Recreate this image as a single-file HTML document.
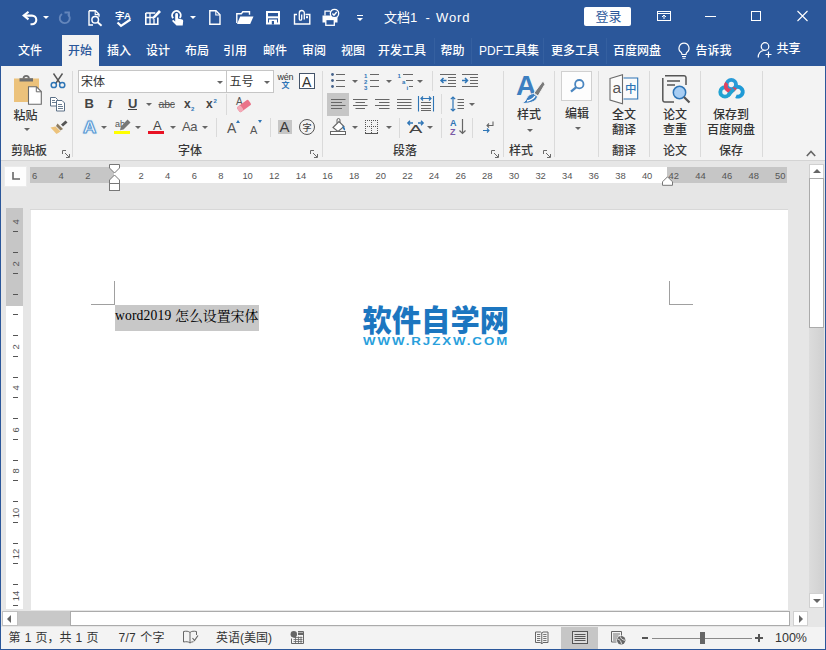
<!DOCTYPE html>
<html lang="zh-CN">
<head>
<meta charset="utf-8">
<title>文档1 - Word</title>
<style>
*{box-sizing:border-box;margin:0;padding:0}
html,body{width:826px;height:650px;overflow:hidden;background:#e6e6e6}
body{position:relative;font-family:"Liberation Sans","Noto Sans CJK SC",sans-serif;font-size:12px;color:#333;line-height:1}
.abs{position:absolute}
.t{position:absolute;white-space:nowrap;line-height:16px;height:16px;font-weight:500;margin-top:0.5px}
#doclat,#doccjk,#wm1,#wm2{margin-top:0;font-weight:400}
svg{position:absolute;overflow:visible}
/* title + tabs */
#title{left:0;top:0;width:826px;height:66.500px;background:#2b579a}
#title .t{color:#fff}
.tab{font-size:12px;top:42px;font-weight:500}
.tsep{position:absolute;top:38px;width:1px;height:26px;background:#3560a0}
#tab-home{left:62px;top:35px;width:37px;height:32px;background:#f3f3f3}
/* ribbon */
#ribbon{left:1px;top:66px;width:824px;height:95px;background:#f3f3f3;border-bottom:1px solid #d4d4d4}
.vsep{position:absolute;width:1px;background:#dadada}
.lbl{color:#333;top:142px}
.btxt{color:#404040}
.dd{position:absolute;width:0;height:0;border-left:3px solid transparent;border-right:3px solid transparent;border-top:3px solid #666}
/* status */
#status{left:1px;top:627px;width:824px;height:22px;background:#f3f3f3}
#status .t{top:630px;color:#383838}
</style>
</head>
<body>
<!-- TITLE BAR -->
<div id="title" class="abs"></div>
<div id="tab-home" class="abs"></div>
<svg style="left:22px;top:10px" width="17" height="16" viewBox="0 0 17 16"><path d="M6.500 1.800L1.700 5.600l4.800 3.800" fill="none" stroke="#fff" stroke-width="2.100"/><path d="M2.500 5.600H10a4.300 4.300 0 0 1 0 8.600H8.500" fill="none" stroke="#fff" stroke-width="2.100"/></svg>
<div class="dd" style="left:43px;top:16px;border-top-color:#fff"></div>
<svg style="left:58px;top:10px" width="14" height="15" viewBox="0 0 14 15"><path d="M9.800 4.200A5 5 0 1 1 4 4" fill="none" stroke="#6486bb" stroke-width="1.900"/><path d="M6.500 2.500h4.500v4.200" fill="none" stroke="#6486bb" stroke-width="1.800"/></svg>
<svg style="left:88px;top:10px" width="15" height="16" viewBox="0 0 15 16"><path d="M1 .8h6.500l3.500 3.500v2.500M1 .8V15h4" fill="none" stroke="#fff" stroke-width="1.400"/><path d="M7.200 1v3.600h3.600" fill="none" stroke="#fff" stroke-width="1.100"/><circle cx="7.200" cy="9.800" r="3.300" fill="none" stroke="#fff" stroke-width="1.500"/><path d="M9.600 12.200l4 3.500" stroke="#fff" stroke-width="1.900"/></svg>
<div class="t" style="left:115px;top:7.500px;font-size:9.500px;font-weight:bold;color:#fff;letter-spacing:-0.5px">字A</div>
<svg style="left:116px;top:17.500px" width="16" height="10" viewBox="0 0 16 10"><path d="M1.500 4.500l3.500 3.300L14.500 1.500" fill="none" stroke="#fff" stroke-width="2.200"/></svg>
<svg style="left:145px;top:9px" width="16" height="16" viewBox="0 0 16 16"><path d="M.8 4h9.500M.8 4v11.200h12V8.500" fill="none" stroke="#fff" stroke-width="1.600"/><path d="M.8 8.500h7.500M5 4v11M9 10v5" stroke="#fff" stroke-width="1.300" fill="none"/><path d="M7.500 10.500l.8-3.300L14 1l2 2-6 6z" fill="#fff"/></svg>
<svg style="left:170px;top:9px" width="14" height="17" viewBox="0 0 14 17"><path d="M3.200 9.200A4.300 4.300 0 1 1 9.800 9" fill="none" stroke="#fff" stroke-width="1.900"/><path d="M5.200 5.500a1.400 1.400 0 0 1 2.800 0V9.500l4.200 1c.6.200 1 .7 1 1.400l-.5 4.600H6.500L2.500 12.500c-.7-.8.300-2 1.300-1.200l1.400 1.200z" fill="#fff"/></svg>
<div class="dd" style="left:190px;top:16px;border-top-color:#fff"></div>
<svg style="left:209px;top:10px" width="12" height="15" viewBox="0 0 12 15"><path d="M.8 .8h6.200l4 4V14.200H.8z" fill="none" stroke="#fff" stroke-width="1.400"/><path d="M6.800 1v4h4" fill="none" stroke="#fff" stroke-width="1.100"/></svg>
<svg style="left:236px;top:11px" width="18" height="14" viewBox="0 0 18 14"><path d="M.8 12V2.800h4.500l1.500-2h6.700v3" fill="none" stroke="#fff" stroke-width="1.400"/><path d="M1 13l3.200-7.500H17.500L14.200 13z" fill="#fff"/></svg>
<svg style="left:266px;top:11px" width="14" height="14" viewBox="0 0 14 14"><path d="M1 1h12v11.500H1z" fill="none" stroke="#fff" stroke-width="2"/><path d="M1 6.300h12" stroke="#fff" stroke-width="2"/><rect x="3" y="8.500" width="8" height="4.500" fill="#fff"/><rect x="5.800" y="10" width="2.200" height="3.500" fill="#2b579a"/></svg>
<svg style="left:293px;top:9px" width="18" height="16" viewBox="0 0 18 16"><path d="M4 5.500H1.500V15H16.800V5.500H12.500" fill="none" stroke="#fff" stroke-width="1.400"/><path d="M8.700 5.500v4.500a1.200 1.200 0 0 1-2.400 0V4a2.500 2.500 0 0 1 5 0V10.500" fill="none" stroke="#fff" stroke-width="1.300"/><rect x="13" y="7.200" width="2" height="2" fill="#fff"/></svg>
<svg style="left:322px;top:9px" width="18" height="17" viewBox="0 0 18 17"><path d="M3 6.500V2.200h5" fill="none" stroke="#fff" stroke-width="1.300"/><path d="M.5 6.500h15v7H.5z" fill="#fff"/><rect x="3.800" y="10.500" width="8.500" height="5.800" fill="#2b579a" stroke="#fff" stroke-width="1.300"/><circle cx="12.500" cy="4.500" r="4.200" fill="#2b579a" stroke="#fff" stroke-width="1.300"/><path d="M10.400 4.500l1.600 1.700 2.700-3.200" fill="none" stroke="#fff" stroke-width="1.400"/></svg>
<div class="abs" style="left:357px;top:14.500px;width:6px;height:1.200px;background:#fff"></div>
<div class="dd" style="left:357px;top:17.500px;border-top-color:#fff"></div>
<div class="t" style="left:384px;top:9px;font-size:13px;color:#fff;font-weight:400">文档1</div>
<div class="t" style="left:425.500px;top:9px;font-size:13px;color:#fff">-</div>
<div class="t" style="left:436px;top:9px;font-size:13px;color:#fff;letter-spacing:0.9px">Word</div>
<div class="abs" style="left:584px;top:7px;width:47px;height:19px;background:#fff;border-radius:2px"></div>
<div class="t" style="left:595.500px;top:8.500px;font-size:13px;color:#2b579a;font-weight:400">登录</div>
<svg style="left:657px;top:11px" width="14" height="10" viewBox="0 0 14 10"><rect x=".5" y=".5" width="13" height="9" fill="none" stroke="#fff"/><path d="M.5 2.500h13" stroke="#fff"/><path d="M7 8V4.200M5 6l2-2 2 2" stroke="#fff" fill="none"/></svg>
<div class="abs" style="left:705px;top:16px;width:11px;height:1px;background:#fff"></div>
<div class="abs" style="left:751px;top:11px;width:10px;height:10px;border:1px solid #fff"></div>
<svg style="left:797px;top:11px" width="11" height="10" viewBox="0 0 11 10"><path d="M.5 0l10 10M10.500 0L.5 10" stroke="#fff" stroke-width="1.100"/></svg>
<div class="t tab" style="left:18px;color:#fff;">文件</div>
<div class="t tab" style="left:68px;color:#2b579a;">开始</div>
<div class="t tab" style="left:107px;color:#fff;">插入</div>
<div class="t tab" style="left:146px;color:#fff;">设计</div>
<div class="t tab" style="left:185px;color:#fff;">布局</div>
<div class="t tab" style="left:223px;color:#fff;">引用</div>
<div class="t tab" style="left:263px;color:#fff;">邮件</div>
<div class="t tab" style="left:302px;color:#fff;">审阅</div>
<div class="t tab" style="left:341px;color:#fff;">视图</div>
<div class="t tab" style="left:378px;color:#fff;">开发工具</div>
<div class="t tab" style="left:440.5px;color:#fff;">帮助</div>
<div class="t tab" style="left:479px;color:#fff;">PDF工具集</div>
<div class="t tab" style="left:551px;color:#fff;">更多工具</div>
<div class="t tab" style="left:613px;color:#fff;">百度网盘</div>
<div class="t tab" style="left:695.5px;color:#fff;">告诉我</div>
<div class="t tab" style="left:776.5px;top:40px;color:#fff">共享</div>
<div class="tsep" style="left:434px"></div>
<div class="tsep" style="left:471px"></div>
<div class="tsep" style="left:543px"></div>
<div class="tsep" style="left:606px"></div>
<svg style="left:677px;top:42px" width="14" height="18" viewBox="0 0 14 18"><path d="M7 1.2a5 5 0 0 0-3 9c.7.6 1 1.3 1 2.3h4c0-1 .3-1.700 1-2.300a5 5 0 0 0-3-9z" fill="none" stroke="#fff" stroke-width="1.200"/><path d="M5 14.500h4M5.500 16.300h3" stroke="#fff" stroke-width="1.100" fill="none"/></svg>
<svg style="left:757px;top:41px" width="16" height="18" viewBox="0 0 16 18"><circle cx="8" cy="5.500" r="3.800" fill="none" stroke="#fff" stroke-width="1.200"/><path d="M1.200 16.500c0-4 2.500-6.500 5.500-7" fill="none" stroke="#fff" stroke-width="1.200"/><path d="M11.500 10.500v6M8.500 13.500h6" stroke="#fff" stroke-width="1.200" fill="none"/></svg>
<!-- RIBBON -->
<div id="ribbon" class="abs"></div>
<div class="vsep" style="left:72px;top:71px;height:86px;background:#dadada"></div>
<div class="vsep" style="left:322px;top:71px;height:86px;background:#dadada"></div>
<div class="vsep" style="left:503px;top:71px;height:86px;background:#dadada"></div>
<div class="vsep" style="left:554px;top:71px;height:86px;background:#dadada"></div>
<div class="vsep" style="left:598px;top:71px;height:86px;background:#dadada"></div>
<div class="vsep" style="left:649px;top:71px;height:86px;background:#dadada"></div>
<div class="vsep" style="left:700px;top:71px;height:86px;background:#dadada"></div>
<div class="vsep" style="left:762px;top:71px;height:86px;background:#dadada"></div>
<div class="t" style="left:11px;top:142.5px;color:#383838">剪贴板</div>
<svg style="left:62px;top:150px" width="8" height="8" viewBox="0 0 8 8"><path d="M.5 4V.5H4" fill="none" stroke="#6a6a6a"/><path d="M3 3l4 4M7.500 4v3.500H4" fill="none" stroke="#6a6a6a"/></svg>
<div class="t" style="left:178px;top:142.5px;color:#383838">字体</div>
<svg style="left:310px;top:150px" width="8" height="8" viewBox="0 0 8 8"><path d="M.5 4V.5H4" fill="none" stroke="#6a6a6a"/><path d="M3 3l4 4M7.500 4v3.500H4" fill="none" stroke="#6a6a6a"/></svg>
<div class="t" style="left:393px;top:142.5px;color:#383838">段落</div>
<svg style="left:491px;top:150px" width="8" height="8" viewBox="0 0 8 8"><path d="M.5 4V.5H4" fill="none" stroke="#6a6a6a"/><path d="M3 3l4 4M7.500 4v3.500H4" fill="none" stroke="#6a6a6a"/></svg>
<div class="t" style="left:509px;top:142.5px;color:#383838">样式</div>
<svg style="left:543px;top:150px" width="8" height="8" viewBox="0 0 8 8"><path d="M.5 4V.5H4" fill="none" stroke="#6a6a6a"/><path d="M3 3l4 4M7.500 4v3.500H4" fill="none" stroke="#6a6a6a"/></svg>
<div class="t" style="left:612px;top:142.5px;color:#383838">翻译</div>
<div class="t" style="left:663px;top:142.5px;color:#383838">论文</div>
<div class="t" style="left:719px;top:142.5px;color:#383838">保存</div>
<svg style="left:806px;top:150px" width="10" height="7" viewBox="0 0 10 7"><path d="M.8 6L5 1.500 9.200 6" fill="none" stroke="#666" stroke-width="1.600"/></svg>
<svg style="left:14px;top:74px" width="28" height="31" viewBox="0 0 28 31"><rect x="0" y="4.500" width="25" height="23.500" fill="#ecc27b"/><path d="M5.500 4.200h13.500v3.300H5.500z" fill="#6e6e6e"/><path d="M9.500 4.500a2.700 2.700 0 0 1 5.400 0" fill="none" stroke="#6e6e6e" stroke-width="1.800"/><path d="M14.500 12.800h8l4.800 4.800v12.600H14.500z" fill="#fff" stroke="#6a6a6a" stroke-width="1.100"/><path d="M22.300 13v4.800h4.800" fill="none" stroke="#6a6a6a" stroke-width="1"/></svg>
<div class="t" style="left:13.5px;top:107px;">粘贴</div>
<div class="dd" style="left:24px;top:128px;border-top-color:#666"></div>
<svg style="left:50px;top:73px" width="16" height="16" viewBox="0 0 16 16"><path d="M3.500 .5l6.800 10M12.500 .5L5.700 10.500" stroke="#555" stroke-width="1.400" fill="none"/><circle cx="3.800" cy="12" r="2.600" fill="none" stroke="#2e75b6" stroke-width="1.500"/><circle cx="12.200" cy="12" r="2.600" fill="none" stroke="#2e75b6" stroke-width="1.500"/></svg>
<svg style="left:50px;top:97px" width="16" height="15" viewBox="0 0 16 15"><path d="M.5 .5h5l2 2V9H.5z" fill="#fff" stroke="#5a6f86" stroke-width="1"/><path d="M2 3.500h3M2 5.500h4" stroke="#5a6f86" stroke-width=".9"/><path d="M6.500 3.500h5.500l2.500 2.500v8h-8z" fill="#fff" stroke="#5a6f86" stroke-width="1"/><path d="M8 7.500h4M8 9.500h5M8 11.500h5" stroke="#5a6f86" stroke-width=".9"/></svg>
<svg style="left:50px;top:120px" width="18" height="14" viewBox="0 0 18 14"><path d="M11 4.500l4.500-4 2 2-4.500 4z" fill="#555"/><path d="M7.500 3.500l5.500 5.500-2.500 1.500-4.500-4.500z" fill="#8a7a60"/><path d="M5.500 6.500l5 5-4 2.500-6-6.500z" fill="#ecc27b"/></svg>
<div class="abs" style="left:78px;top:70px;width:149px;height:23px;background:#fff;border:1px solid #c6c6c6"></div>
<div class="abs" style="left:226px;top:70px;width:48px;height:23px;background:#fff;border:1px solid #c6c6c6"></div>
<div class="t" style="left:81px;top:73.5px;font-weight:400">宋体</div>
<div class="dd" style="left:216.5px;top:80.5px;border-top-color:#666"></div>
<div class="t" style="left:229.5px;top:73.5px;font-weight:400">五号</div>
<div class="dd" style="left:263.5px;top:80.5px;border-top-color:#666"></div>
<div class="t" style="left:277.5px;top:68.500px;font-size:9px;color:#333;letter-spacing:-0.2px">wén</div>
<div class="t" style="left:281.500px;top:77.500px;font-size:8px;color:#2e75b6;font-weight:bold">文</div>
<div class="abs" style="left:299px;top:73px;width:16px;height:16px;border:1px solid #44546a;background:#fff"></div>
<div class="t" style="left:302px;top:73px;font-size:14px;color:#333">A</div>
<div class="t" style="left:84.5px;top:95.5px;font-weight:bold;font-size:13px;color:#444">B</div>
<div class="t" style="left:107.5px;top:95.5px;font-weight:bold;font-style:italic;font-size:13px;color:#444;font-family:'Liberation Serif',serif">I</div>
<div class="t" style="left:128px;top:95px;font-size:13px;color:#444;font-weight:bold">U</div>
<div class="abs" style="left:128px;top:109px;width:9px;height:1px;background:#444"></div>
<div class="dd" style="left:146px;top:102.5px;border-top-color:#666"></div>
<div class="t" style="left:158.5px;top:95.5px;font-size:10.500px;color:#555;text-decoration:line-through;letter-spacing:-0.2px">abc</div>
<div class="t" style="left:184px;top:95.5px;font-weight:bold;font-size:12px;color:#444">x</div>
<div class="t" style="left:191px;top:100px;font-size:6px;color:#2e75b6;font-weight:bold">2</div>
<div class="t" style="left:206px;top:95.5px;font-weight:bold;font-size:12px;color:#444">x</div>
<div class="t" style="left:213.5px;top:92px;font-size:6px;color:#2e75b6;font-weight:bold">2</div>
<div class="vsep" style="left:226px;top:94px;height:20.5px;background:#dadada"></div>
<div class="t" style="left:236px;top:93px;font-size:10px;color:#555">A</div>
<svg style="left:236px;top:100px" width="16" height="12" viewBox="0 0 16 12"><g transform="rotate(-36 8 6)"><rect x="1" y="2.800" width="14" height="6.400" rx="1.500" fill="#ea7389"/><rect x="1" y="2.800" width="4.500" height="6.400" rx="1.500" fill="#f3a9b6"/></g></svg>
<div class="t" style="left:82.500px;top:118px;font-size:16.500px;color:#fff;font-weight:bold;-webkit-text-stroke:1px #5b9bd5;text-shadow:0 0 2px #7fb2e5,0 0 1px #7fb2e5;transform:scaleX(1.120);transform-origin:0 0">A</div>
<div class="dd" style="left:100.5px;top:126px;border-top-color:#666"></div>
<div class="t" style="left:115px;top:115.5px;font-size:9px;color:#555">ab</div>
<svg style="left:118px;top:119px" width="13" height="12" viewBox="0 0 13 12"><path d="M9.500 .5l3 3-7 7-3.500 .8.800-3.500z" fill="#777"/></svg>
<div class="abs" style="left:114px;top:130.700px;width:16px;height:3.600px;background:#ffff00"></div>
<div class="dd" style="left:135px;top:126px;border-top-color:#666"></div>
<div class="t" style="left:153px;top:117.5px;font-size:13px;color:#444">A</div>
<div class="abs" style="left:148px;top:130.700px;width:16px;height:3.600px;background:#e81123"></div>
<div class="dd" style="left:169.5px;top:126px;border-top-color:#666"></div>
<div class="t" style="left:182px;top:118.5px;font-size:13px;color:#555;letter-spacing:-0.3px">Aa</div>
<div class="dd" style="left:201.5px;top:126px;border-top-color:#666"></div>
<div class="vsep" style="left:216px;top:118px;height:19px;background:#dadada"></div>
<div class="t" style="left:227px;top:119.5px;font-size:14px;color:#555">A</div>
<div class="abs" style="left:236px;top:120px;width:0;height:0;border-left:2.500px solid transparent;border-right:2.500px solid transparent;border-bottom:3px solid #2e75b6"></div>
<div class="t" style="left:250px;top:121.5px;font-size:11px;color:#555">A</div>
<div class="abs" style="left:257.500px;top:120px;width:0;height:0;border-left:2.500px solid transparent;border-right:2.500px solid transparent;border-top:3px solid #2e75b6"></div>
<div class="vsep" style="left:270px;top:118px;height:19px;background:#dadada"></div>
<div class="abs" style="left:278px;top:120px;width:14px;height:14px;background:#c6c6c6"></div>
<div class="t" style="left:279.500px;top:118.500px;font-size:15px;color:#3a3a3a">A</div>
<div class="abs" style="left:299px;top:119px;width:16px;height:16px;border:1px solid #555;border-radius:8px"></div>
<div class="t" style="left:302.5px;top:119px;font-size:9px;color:#444">字</div>
<svg style="left:331px;top:72px" width="14" height="17" viewBox="0 0 14 17"><circle cx="1.500" cy="2.500" r="1.400" fill="#44618a"/><circle cx="1.500" cy="8.500" r="1.400" fill="#44618a"/><circle cx="1.500" cy="14.500" r="1.400" fill="#44618a"/><path d="M5 2.500h9M5 8.500h9M5 14.500h9" stroke="#666" stroke-width="1.100"/></svg>
<div class="dd" style="left:351.5px;top:80px;border-top-color:#666"></div>
<svg style="left:364px;top:72px" width="16" height="17" viewBox="0 0 16 17"><path d="M6 2.500h9M6 8.500h9M6 14.500h9" stroke="#666" stroke-width="1.100"/></svg>
<div class="t" style="left:364px;top:67.500px;font-size:6px;font-weight:bold;color:#2e75b6">1</div>
<div class="t" style="left:364px;top:73.500px;font-size:6px;font-weight:bold;color:#2e75b6">2</div>
<div class="t" style="left:364px;top:79.500px;font-size:6px;font-weight:bold;color:#2e75b6">3</div>
<div class="dd" style="left:385.5px;top:80px;border-top-color:#666"></div>
<svg style="left:397px;top:72px" width="17" height="17" viewBox="0 0 17 17"><path d="M6 2.500h10M9 8.500h7M12 14.500h4" stroke="#666" stroke-width="1.100"/></svg>
<div class="t" style="left:397.5px;top:67.500px;font-size:6px;font-weight:bold;color:#2e75b6">1</div>
<div class="t" style="left:402px;top:73.500px;font-size:6px;font-weight:bold;color:#2e75b6">a</div>
<div class="t" style="left:406.5px;top:79.500px;font-size:6px;font-weight:bold;color:#2e75b6">i</div>
<div class="dd" style="left:417px;top:80px;border-top-color:#666"></div>
<div class="vsep" style="left:432px;top:71px;height:19.5px;background:#dadada"></div>
<svg style="left:440px;top:74px" width="17" height="13" viewBox="0 0 17 13"><path d="M0 .5h16M8 3.500h8M8 6.500h8M8 9.500h8M0 12.500h16" stroke="#666" stroke-width="1"/><path d="M6.500 6.500H1M3.500 4L1 6.500 3.500 9" fill="none" stroke="#2e75b6" stroke-width="1.500"/></svg>
<svg style="left:462px;top:74px" width="17" height="13" viewBox="0 0 17 13"><path d="M0 .5h16M8 3.500h8M8 6.500h8M8 9.500h8M0 12.500h16" stroke="#666" stroke-width="1"/><path d="M0 6.500h5.500M3 4l2.500 2.500L3 9" fill="none" stroke="#2e75b6" stroke-width="1.500"/></svg>
<div class="abs" style="left:327px;top:93px;width:22px;height:23px;background:#c6c6c6"></div>
<svg style="left:330.500px;top:97px" width="15" height="14" viewBox="0 0 15 14"><path d="M0 2.500h14.500M0 5.500h11M0 8.500h14.500M0 11.500h11" stroke="#666" stroke-width="1.100"/></svg>
<svg style="left:352.500px;top:97px" width="15" height="14" viewBox="0 0 15 14"><path d="M0 2.500h14.500M2.500 5.500h9.500M0 8.500h14.500M2.500 11.500h9.500" stroke="#666" stroke-width="1.100"/></svg>
<svg style="left:374.500px;top:97px" width="15" height="14" viewBox="0 0 15 14"><path d="M0 2.500h14.500M4 5.500h10.500M0 8.500h14.500M4 11.500h10.500" stroke="#666" stroke-width="1.100"/></svg>
<svg style="left:396.500px;top:97px" width="15" height="14" viewBox="0 0 15 14"><path d="M0 2.500h14.500M0 5.500h14.500M0 8.500h14.500M0 11.500h14.500" stroke="#666" stroke-width="1.100"/></svg>
<svg style="left:418px;top:96px" width="16" height="16" viewBox="0 0 16 16"><path d="M.5 0v15.500M15.500 0v15.500" stroke="#2e75b6" stroke-width="1.100"/><path d="M3 2.500h10M5 .5l-2 2 2 2M11 .5l2 2-2 2" fill="none" stroke="#2e75b6" stroke-width="1.200"/><path d="M3 6.500h10M3 9.500h10M3 12.500h10M3 14.500h10" stroke="#666" stroke-width="1"/></svg>
<div class="vsep" style="left:441px;top:94px;height:19.5px;background:#dadada"></div>
<svg style="left:450px;top:96px" width="14" height="16" viewBox="0 0 14 16"><path d="M3 1v14M.8 3.200L3 1l2.200 2.200M.8 12.800L3 15l2.200-2.200" fill="none" stroke="#2e75b6" stroke-width="1.200"/><path d="M7.500 3.500h6.500M7.500 6.500h6.500M7.500 9.500h6.500M7.500 12.500h6.500" stroke="#666" stroke-width="1"/></svg>
<div class="dd" style="left:468.5px;top:102.5px;border-top-color:#666"></div>
<svg style="left:330px;top:118px" width="17" height="17" viewBox="0 0 17 17"><path d="M3 9.500l6-6 5 5-6 5z" fill="#fff" stroke="#666" stroke-width="1.100"/><path d="M7 5V2a1.500 1.500 0 0 1 3 0v3" fill="none" stroke="#666" stroke-width="1"/><path d="M12.500 7.500c2 1 3 3 2.500 5-1.500-.5-2.500-2-2.500-5z" fill="#2e75b6"/><rect x=".5" y="13.500" width="15" height="3" fill="#fff" stroke="#666" stroke-width="1"/></svg>
<div class="dd" style="left:351.5px;top:126px;border-top-color:#666"></div>
<svg style="left:365px;top:120px" width="13" height="14" viewBox="0 0 13 14" shape-rendering="crispEdges"><path d="M.5 0v13M6.500 0v13M12.500 0v13M0 .5h13M0 6.500h13" fill="none" stroke="#555" stroke-width="1" stroke-dasharray="1 1"/><path d="M0 13.500h13" stroke="#555" stroke-width="1"/></svg>
<div class="dd" style="left:385.5px;top:126px;border-top-color:#666"></div>
<div class="vsep" style="left:399px;top:118px;height:19.5px;background:#dadada"></div>
<div class="t" style="left:408.500px;top:121px;font-size:10px;color:#444;transform:scaleX(2);transform-origin:0 0">A</div>
<svg style="left:407px;top:119.500px" width="17" height="6" viewBox="0 0 17 6"><path d="M1 3h5M3 .8L.8 3 3 5.200M11 3h5M14 .8L16.200 3 14 5.200" fill="none" stroke="#2e75b6" stroke-width="1.300"/></svg>
<div class="dd" style="left:426.5px;top:126px;border-top-color:#666"></div>
<div class="vsep" style="left:441px;top:118px;height:19.5px;background:#dadada"></div>
<div class="t" style="left:450px;top:114.5px;font-size:9px;font-weight:bold;color:#2e75b6">A</div>
<div class="t" style="left:450px;top:123px;font-size:9px;font-weight:bold;color:#7a5aa6">Z</div>
<svg style="left:459px;top:119px" width="7" height="16" viewBox="0 0 7 16"><path d="M3.500 0v14.500M.5 11.500l3 3 3-3" fill="none" stroke="#666" stroke-width="1.200"/></svg>
<div class="vsep" style="left:472px;top:118px;height:19.5px;background:#dadada"></div>
<svg style="left:483px;top:121px" width="11" height="13" viewBox="0 0 11 13"><path d="M10 .5v4H4M6 2.500l-2 2 2 2" fill="none" stroke="#666" stroke-width="1.100"/><path d="M0 9.500H6M4 7.500l2 2-2 2" fill="none" stroke="#2e75b6" stroke-width="1.100"/></svg>
<div class="t" style="left:516px;top:75px;font-size:28px;font-weight:bold;color:#3d7fc0;line-height:20px">A</div>
<svg style="left:521px;top:81px" width="24" height="23" viewBox="0 0 24 23"><path d="M22 0L24 3.200 17 15l-4-3z" fill="#7a7a7a" stroke="#f3f3f3" stroke-width="1"/><path d="M12.500 12.500l4 3c-.5 4.200-5.500 7-16 7 3.500-1.500 4-3 5-5 1.200-2.700 3.800-4.800 7-5z" fill="#3d7fc0" stroke="#f3f3f3" stroke-width="1"/><path d="M6 20c3-.5 6-2 8-4.800" stroke="#fff" stroke-width="1.400" fill="none"/></svg>
<div class="t" style="left:517px;top:106.5px;">样式</div>
<div class="dd" style="left:527px;top:128.5px;border-top-color:#666"></div>
<div class="abs" style="left:561px;top:71px;width:31px;height:30px;background:#fdfdfd;border:1px solid #d0d0d0"></div>
<svg style="left:569px;top:78px" width="16" height="15" viewBox="0 0 16 15"><circle cx="10.300" cy="6.200" r="4.200" fill="none" stroke="#4a86c0" stroke-width="1.800"/><path d="M7.300 9.200L2 13.600" stroke="#4a86c0" stroke-width="2.300"/></svg>
<div class="t" style="left:565px;top:105px;">编辑</div>
<div class="dd" style="left:575px;top:126.5px;border-top-color:#666"></div>
<svg style="left:609px;top:74px" width="30" height="30" viewBox="0 0 30 30"><path d="M1 4.500L13.500 .8v29L1 26z" fill="#fbfbfb" stroke="#6a6a6a" stroke-width="1.100"/><path d="M14.500 4h14.200v21H14.500" fill="#fbfbfb" stroke="#2e75b6" stroke-width="1.100"/></svg>
<div class="t" style="left:612.500px;top:79.500px;font-size:15.500px;color:#555">a</div>
<div class="t" style="left:625px;top:80.500px;font-size:11.500px;color:#2e75b6">中</div>
<div class="t" style="left:612px;top:106.5px;">全文</div>
<div class="t" style="left:612px;top:121.5px;">翻译</div>
<svg style="left:662px;top:75px" width="30" height="30" viewBox="0 0 30 30"><path d="M3 .8h19a2 2 0 0 1 2 2V10M.8 3v22a2 2 0 0 0 2 2H12" fill="none" stroke="#555" stroke-width="1.500"/><path d="M5 6h13M5 10h8" stroke="#555" stroke-width="1.500"/><circle cx="17.500" cy="17.500" r="6.200" fill="#a7cdf3" stroke="#2e75b6" stroke-width="1.500"/><path d="M22 22l5.500 5.500" stroke="#555" stroke-width="2.200"/></svg>
<div class="t" style="left:663px;top:106.5px;">论文</div>
<div class="t" style="left:663px;top:121.5px;">查重</div>
<svg style="left:717.800px;top:77.900px" width="27" height="21" viewBox="0 0 27 21"><circle cx="7" cy="13.900" r="4.700" fill="none" stroke="#22a3d2" stroke-width="3.900"/><path d="M16.500 10.500A4.800 4.800 0 1 1 18 18.200" fill="none" stroke="#1f9ad6" stroke-width="3.900"/><circle cx="13.300" cy="6.600" r="4.700" fill="none" stroke="#2a9bd8" stroke-width="3.900"/><path d="M8.790 4.960A4.800 4.800 0 1 0 16.980 9.690" fill="none" stroke="#e0435f" stroke-width="3.900"/><path d="M10 17.500L16 11" stroke="#22a3d2" stroke-width="3.500"/></svg>
<div class="t" style="left:713px;top:106.5px;">保存到</div>
<div class="t" style="left:707px;top:121.5px;">百度网盘</div>
<!-- DOC AREA -->
<div class="abs" style="left:3.500px;top:165.500px;width:23px;height:21.500px;background:#fdfdfd;border:1.500px solid #ebebeb"></div>
<svg style="left:12px;top:172px" width="8" height="8" viewBox="0 0 8 8"><path d="M1 0v7h7" fill="none" stroke="#666" stroke-width="1.600"/></svg>
<div class="abs" style="left:30px;top:167px;width:757px;height:16px;background:#c6c6c6"></div>
<div class="abs" style="left:114px;top:167px;width:553px;height:16px;background:#fff"></div>
<div class="t" style="left:131.0px;top:167px;width:20px;text-align:center;font-size:9.400px;color:#555">2</div>
<div class="t" style="left:157.7px;top:167px;width:20px;text-align:center;font-size:9.400px;color:#555">4</div>
<div class="t" style="left:184.3px;top:167px;width:20px;text-align:center;font-size:9.400px;color:#555">6</div>
<div class="t" style="left:210.9px;top:167px;width:20px;text-align:center;font-size:9.400px;color:#555">8</div>
<div class="t" style="left:237.6px;top:167px;width:20px;text-align:center;font-size:9.400px;color:#555">10</div>
<div class="t" style="left:264.2px;top:167px;width:20px;text-align:center;font-size:9.400px;color:#555">12</div>
<div class="t" style="left:290.9px;top:167px;width:20px;text-align:center;font-size:9.400px;color:#555">14</div>
<div class="t" style="left:317.5px;top:167px;width:20px;text-align:center;font-size:9.400px;color:#555">16</div>
<div class="t" style="left:344.1px;top:167px;width:20px;text-align:center;font-size:9.400px;color:#555">18</div>
<div class="t" style="left:370.8px;top:167px;width:20px;text-align:center;font-size:9.400px;color:#555">20</div>
<div class="t" style="left:397.4px;top:167px;width:20px;text-align:center;font-size:9.400px;color:#555">22</div>
<div class="t" style="left:424.0px;top:167px;width:20px;text-align:center;font-size:9.400px;color:#555">24</div>
<div class="t" style="left:450.7px;top:167px;width:20px;text-align:center;font-size:9.400px;color:#555">26</div>
<div class="t" style="left:477.3px;top:167px;width:20px;text-align:center;font-size:9.400px;color:#555">28</div>
<div class="t" style="left:503.9px;top:167px;width:20px;text-align:center;font-size:9.400px;color:#555">30</div>
<div class="t" style="left:530.6px;top:167px;width:20px;text-align:center;font-size:9.400px;color:#555">32</div>
<div class="t" style="left:557.2px;top:167px;width:20px;text-align:center;font-size:9.400px;color:#555">34</div>
<div class="t" style="left:583.8px;top:167px;width:20px;text-align:center;font-size:9.400px;color:#555">36</div>
<div class="t" style="left:610.5px;top:167px;width:20px;text-align:center;font-size:9.400px;color:#555">38</div>
<div class="t" style="left:637.1px;top:167px;width:20px;text-align:center;font-size:9.400px;color:#555">40</div>
<div class="t" style="left:663.8px;top:167px;width:20px;text-align:center;font-size:9.400px;color:#555">42</div>
<div class="t" style="left:690.4px;top:167px;width:20px;text-align:center;font-size:9.400px;color:#555">44</div>
<div class="t" style="left:717.0px;top:167px;width:20px;text-align:center;font-size:9.400px;color:#555">46</div>
<div class="t" style="left:743.7px;top:167px;width:20px;text-align:center;font-size:9.400px;color:#555">48</div>
<div class="t" style="left:770.3px;top:167px;width:20px;text-align:center;font-size:9.400px;color:#555">50</div>
<div class="t" style="left:77.8px;top:167px;width:20px;text-align:center;font-size:9.400px;color:#555">2</div>
<div class="t" style="left:51.1px;top:167px;width:20px;text-align:center;font-size:9.400px;color:#555">4</div>
<div class="t" style="left:24.5px;top:167px;width:20px;text-align:center;font-size:9.400px;color:#555">6</div>
<svg style="left:109px;top:164px" width="12" height="28" viewBox="0 0 12 28"><path d="M.5 .5h10v3.500l-5 5-5-5z" fill="#fff" stroke="#777"/><path d="M5.500 11l5 5v3.500H.5V16z" fill="#fff" stroke="#777"/><rect x=".5" y="19.500" width="10" height="7" fill="#fff" stroke="#777"/></svg>
<svg style="left:662px;top:175.500px" width="12" height="10" viewBox="0 0 12 10"><path d="M5.500 .8l5 5v3.500H.5V5.800z" fill="#fff" stroke="#777"/></svg>
<div class="abs" style="left:31px;top:210px;width:756.500px;height:399.500px;background:#fff"></div>
<div class="abs" style="left:30px;top:209px;width:758px;height:1px;background:#d8d8d8"></div>
<div class="abs" style="left:6px;top:208px;width:17px;height:401px;background:#fff"></div>
<div class="abs" style="left:6px;top:208px;width:17px;height:98px;background:#c6c6c6"></div>
<div class="abs" style="left:114px;top:281px;width:1px;height:24px;background:#a0a0a0"></div>
<div class="abs" style="left:91px;top:304px;width:24px;height:1px;background:#a0a0a0"></div>
<div class="abs" style="left:668.500px;top:281px;width:1px;height:24px;background:#a0a0a0"></div>
<div class="abs" style="left:668.500px;top:304px;width:24px;height:1px;background:#a0a0a0"></div>
<div class="abs" style="left:115px;top:305px;width:144px;height:26px;background:#c8c8c8"></div>
<div class="t" id="doclat" style="left:115px;top:306.500px;font-family:'Liberation Serif',serif;font-size:13.600px;color:#000;height:18px;line-height:18px;letter-spacing:0.150px">word2019</div><div class="t" id="doccjk" style="left:175px;top:306px;font-family:'Noto Serif CJK SC',serif;font-size:14px;color:#000;height:18px;line-height:18px;letter-spacing:-0.100px">怎么设置宋体</div>
<div class="t" id="wm1" style="left:362.500px;top:302px;font-size:29.300px;font-weight:900;color:#1c76c0;height:32px;line-height:32px;font-family:'Noto Sans CJK SC',sans-serif">软件自学网</div>
<div class="t" id="wm2" style="left:362.500px;top:335.500px;font-size:10.300px;font-weight:bold;color:#29a0dc;height:12px;line-height:12px;letter-spacing:1.500px;transform-origin:0 0;transform:scaleX(1.290)">WWW.RJZXW.COM</div>
<div class="abs" style="left:808px;top:162px;width:17px;height:448px;background:#e6e6e6"></div>
<div class="abs" style="left:809px;top:164px;width:15px;height:444px;background:linear-gradient(90deg,#dcdcdc,#d0d0d0)"></div>
<div class="abs" style="left:809px;top:164px;width:15px;height:15px;background:#fff;border:1px solid #d0d0d0"></div>
<div class="abs" style="left:809px;top:178px;width:15px;height:150px;background:#fff;border:1px solid #ababab"></div>
<div class="abs" style="left:809px;top:593px;width:15px;height:15px;background:#fff;border:1px solid #d0d0d0"></div>
<div class="abs" style="left:812.500px;top:169px;width:0;height:0;border-left:4px solid transparent;border-right:4px solid transparent;border-bottom:4px solid #666"></div>
<div class="abs" style="left:812.500px;top:599px;width:0;height:0;border-left:4px solid transparent;border-right:4px solid transparent;border-top:4px solid #666"></div>
<div class="abs" style="left:1px;top:610px;width:808px;height:17px;background:#e6e6e6"></div>
<div class="abs" style="left:2px;top:611px;width:806px;height:15px;background:#c8c8c8"></div>
<div class="abs" style="left:2px;top:611px;width:16px;height:15px;background:#fff;border:1px solid #c0c0c0"></div>
<div class="abs" style="left:70px;top:611px;width:720px;height:15px;background:#fff;border:1px solid #ababab"></div>
<div class="abs" style="left:790px;top:611px;width:3px;height:15px;background:#e6e6e6"></div>
<div class="abs" style="left:793px;top:611px;width:15px;height:15px;background:#fff;border:1px solid #d0d0d0"></div>
<div class="abs" style="left:7px;top:614.500px;width:0;height:0;border-top:4px solid transparent;border-bottom:4px solid transparent;border-right:4px solid #666"></div>
<div class="abs" style="left:798.500px;top:614.500px;width:0;height:0;border-top:4px solid transparent;border-bottom:4px solid transparent;border-left:4px solid #666"></div>
<div class="abs" style="left:13px;top:231.4px;width:5px;height:1px;background:#555"></div>
<div class="abs" style="left:13px;top:252.1px;width:5px;height:1px;background:#555"></div>
<div class="abs" style="left:13px;top:272.9px;width:5px;height:1px;background:#555"></div>
<div class="abs" style="left:13px;top:293.6px;width:5px;height:1px;background:#555"></div>
<div class="abs" style="left:13px;top:314.4px;width:5px;height:1px;background:#555"></div>
<div class="abs" style="left:13px;top:335.1px;width:5px;height:1px;background:#555"></div>
<div class="abs" style="left:13px;top:355.9px;width:5px;height:1px;background:#555"></div>
<div class="abs" style="left:13px;top:376.6px;width:5px;height:1px;background:#555"></div>
<div class="abs" style="left:13px;top:397.4px;width:5px;height:1px;background:#555"></div>
<div class="abs" style="left:13px;top:418.1px;width:5px;height:1px;background:#555"></div>
<div class="abs" style="left:13px;top:438.9px;width:5px;height:1px;background:#555"></div>
<div class="abs" style="left:13px;top:459.6px;width:5px;height:1px;background:#555"></div>
<div class="abs" style="left:13px;top:480.4px;width:5px;height:1px;background:#555"></div>
<div class="abs" style="left:13px;top:501.1px;width:5px;height:1px;background:#555"></div>
<div class="abs" style="left:13px;top:521.9px;width:5px;height:1px;background:#555"></div>
<div class="abs" style="left:13px;top:542.6px;width:5px;height:1px;background:#555"></div>
<div class="abs" style="left:13px;top:563.4px;width:5px;height:1px;background:#555"></div>
<div class="abs" style="left:13px;top:584.1px;width:5px;height:1px;background:#555"></div>
<div class="abs" style="left:13px;top:604.9px;width:5px;height:1px;background:#555"></div>
<div class="t" style="left:5.5px;top:213.5px;width:20px;text-align:center;font-size:9.400px;color:#555;transform:rotate(-90deg)">4</div>
<div class="t" style="left:5.5px;top:255.0px;width:20px;text-align:center;font-size:9.400px;color:#555;transform:rotate(-90deg)">2</div>
<div class="t" style="left:5.5px;top:338.0px;width:20px;text-align:center;font-size:9.400px;color:#555;transform:rotate(-90deg)">2</div>
<div class="t" style="left:5.5px;top:379.5px;width:20px;text-align:center;font-size:9.400px;color:#555;transform:rotate(-90deg)">4</div>
<div class="t" style="left:5.5px;top:421.0px;width:20px;text-align:center;font-size:9.400px;color:#555;transform:rotate(-90deg)">6</div>
<div class="t" style="left:5.5px;top:462.5px;width:20px;text-align:center;font-size:9.400px;color:#555;transform:rotate(-90deg)">8</div>
<div class="t" style="left:5.5px;top:504.0px;width:20px;text-align:center;font-size:9.400px;color:#555;transform:rotate(-90deg)">10</div>
<div class="t" style="left:5.5px;top:545.5px;width:20px;text-align:center;font-size:9.400px;color:#555;transform:rotate(-90deg)">12</div>
<div class="t" style="left:5.5px;top:587.0px;width:20px;text-align:center;font-size:9.400px;color:#555;transform:rotate(-90deg)">14</div>
<!-- STATUS -->
<div id="status" class="abs"></div>
<div class="t" style="left:8.500px;top:629.500px;word-spacing:0.800px;font-weight:400">第 1 页，共 1 页</div>
<div class="t" style="left:118.500px;top:629.500px;letter-spacing:0.300px;word-spacing:0.500px;font-weight:400">7/7 个字</div>
<div class="t" style="left:216px;top:629.500px;font-weight:400">英语(美国)</div>
<svg style="left:183px;top:630px" width="16" height="14" viewBox="0 0 16 14"><path d="M7 2.500C5.500 1 3 1 .5 1.500v10.500c2.500-.5 5-.5 6.500 1zM7 2.500C8.500 1 11 1 13.500 1.500V5M7 13c1-.8 2-1.200 3.500-1.300" fill="none" stroke="#666" stroke-width="1"/><path d="M9.500 8l2 2.500L15 5.500" fill="none" stroke="#666" stroke-width="1.200"/></svg>
<svg style="left:290px;top:631px" width="14" height="13" viewBox="0 0 14 13"><circle cx="3.800" cy="3.200" r="3.200" fill="#666"/><path d="M8 .5h5.500v12H1.500V7.500" fill="none" stroke="#666" stroke-width="1"/><path d="M8 1.500h5v2.500H8z" fill="#666"/><path d="M3.500 6.500h9M3.500 8.500h9M3.500 10.500h9M5.500 5.500v7M8.500 5.500v7M11 5.500v7" stroke="#666" stroke-width=".8"/></svg>
<svg style="left:535px;top:630.500px" width="14" height="14" viewBox="0 0 14 14"><path d="M.5 1h5l1.250 1 1.250-1h5v10.500h-5L6.750 13 5.500 11.500h-5z" fill="none" stroke="#666" stroke-width="1"/><path d="M6.750 2v10.500" stroke="#666" stroke-width="1"/><path d="M2 3.500h3.300M2 5.500h3.300M2 7.500h3.300M2 9.500h3.300M8.200 3.500h3.300M8.200 5.500h3.300M8.200 7.500h3.300M8.200 9.500h3.300" stroke="#666" stroke-width=".9"/></svg>
<div class="abs" style="left:561px;top:627px;width:37px;height:22px;background:#c6c6c6"></div>
<svg style="left:572px;top:631px" width="16" height="13" viewBox="0 0 16 13"><rect x=".5" y=".5" width="15" height="12" fill="#dcdcdc" stroke="#555" stroke-width="1"/><path d="M2.500 3.500h11M2.500 5.500h11M2.500 7.500h11M2.500 9.500h11" stroke="#555" stroke-width="1"/></svg>
<svg style="left:611px;top:631px" width="15" height="14" viewBox="0 0 15 14"><path d="M10.500 .5H.5v10.500H5.500M10.500 .5v4" fill="none" stroke="#666" stroke-width="1"/><path d="M2 3h7M2 5h5.500M2 7h4M2 9h3.500" stroke="#666" stroke-width=".9"/><circle cx="10.200" cy="9.300" r="4.200" fill="#666"/><path d="M6.500 8c2.500.5 3.500 2 4 5M9.500 5.500c0 2 1.500 3.500 4.500 3.800" fill="none" stroke="#e8e8e8" stroke-width=".9"/></svg>
<div class="abs" style="left:642px;top:637px;width:6px;height:2px;background:#555"></div>
<div class="abs" style="left:652px;top:637.500px;width:100px;height:1px;background:#8a8a8a"></div>
<div class="abs" style="left:700px;top:632px;width:5px;height:12px;background:#666"></div>
<div class="abs" style="left:755px;top:637.200px;width:8px;height:1.600px;background:#555"></div>
<div class="abs" style="left:758.200px;top:634px;width:1.600px;height:8px;background:#555"></div>
<div class="t" style="left:775px;top:629.500px;font-size:12.500px">100%</div>
<!-- window border -->
<div class="abs" style="left:0;top:66px;width:1.300px;height:584px;background:#2b579a"></div>
<div class="abs" style="left:824.500px;top:66px;width:1.500px;height:584px;background:#2b579a"></div>
<div class="abs" style="left:0;top:648.500px;width:826px;height:1.500px;background:#2b579a"></div>
</body>
</html>
